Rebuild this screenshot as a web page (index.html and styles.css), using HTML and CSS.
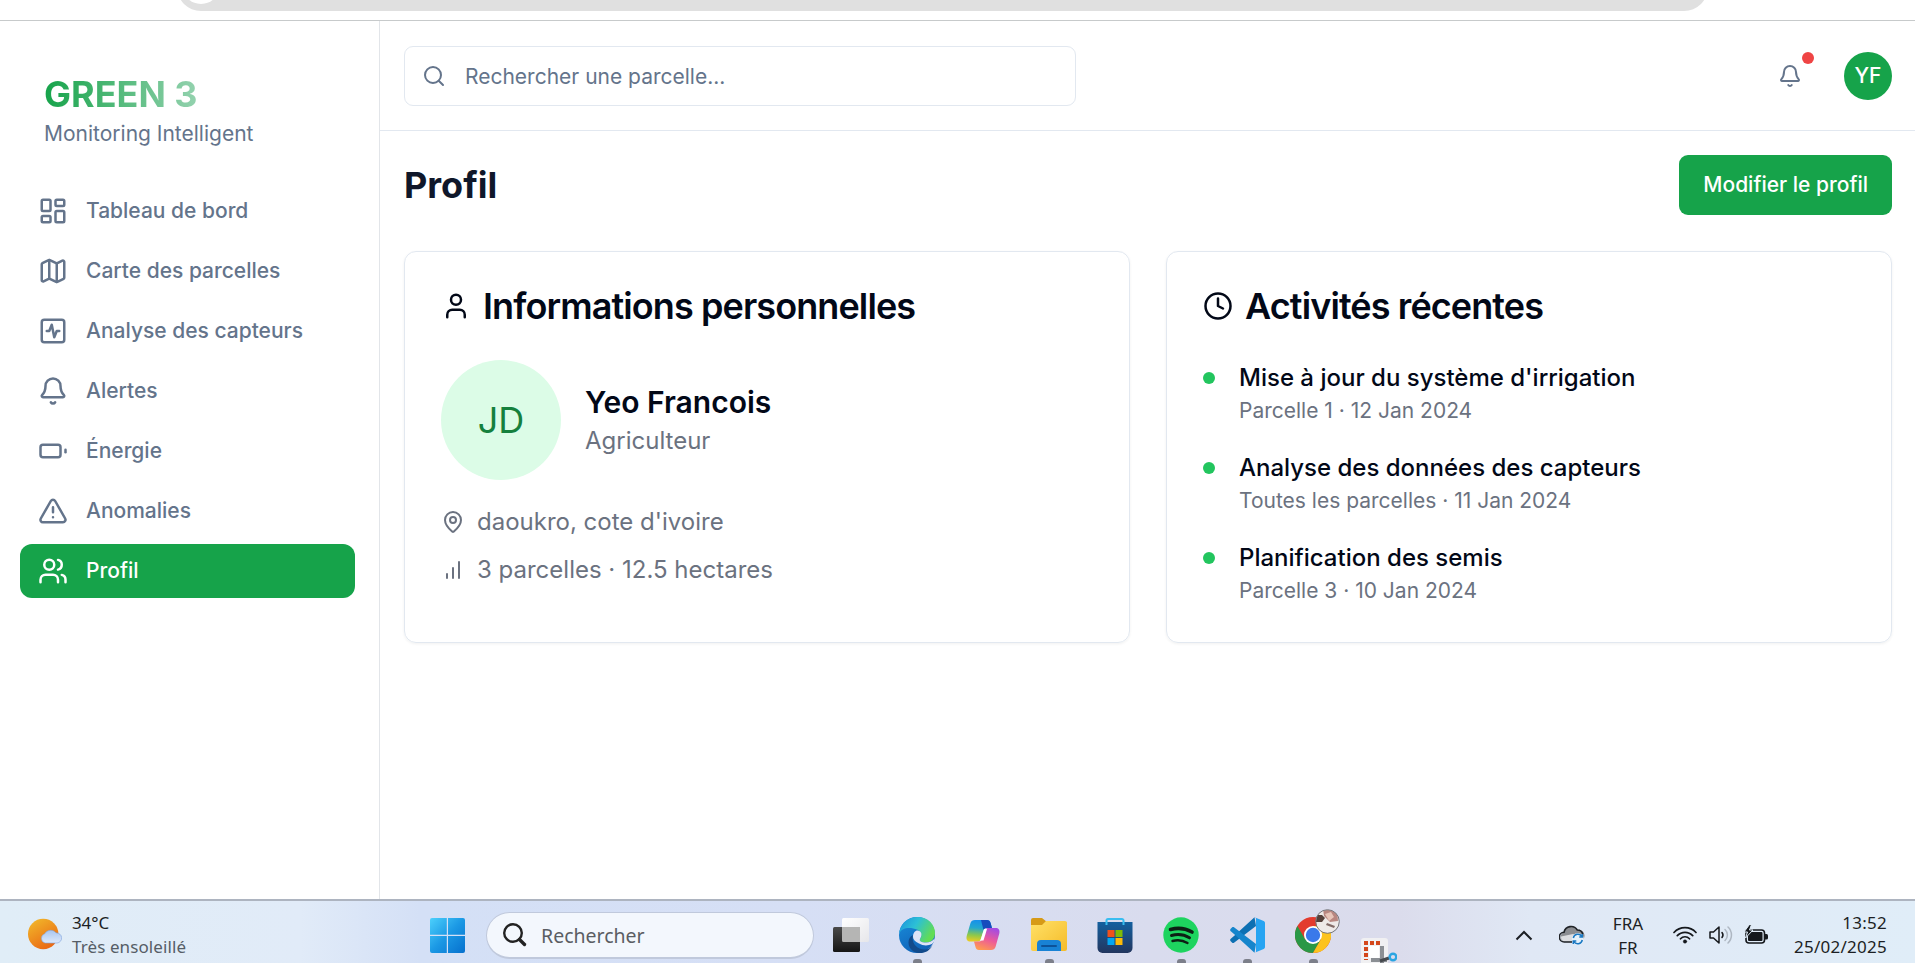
FILE: index.html
```html
<!DOCTYPE html>
<html lang="fr">
<head>
<meta charset="utf-8">
<title>Green 3 - Profil</title>
<link rel="stylesheet" href="styles.css">
</head>
<body>
<div class="browser-bar"><div class="address"><span class="address-icon"></span></div></div>

<div class="app">
  <aside class="sidebar">
    <div class="brand">
      <div class="brand-name">GREEN 3</div>
      <div class="brand-sub">Monitoring Intelligent</div>
    </div>
    <nav class="nav">
      <a class="nav-item"><svg class="icon" viewBox="0 0 24 24"><rect width="7" height="9" x="3" y="3" rx="1"/><rect width="7" height="5" x="14" y="3" rx="1"/><rect width="7" height="9" x="14" y="12" rx="1"/><rect width="7" height="5" x="3" y="16" rx="1"/></svg>Tableau de bord</a>
      <a class="nav-item"><svg class="icon" viewBox="0 0 24 24"><path d="M14.106 5.553a2 2 0 0 0 1.788 0l3.659-1.83A1 1 0 0 1 21 4.619v12.764a1 1 0 0 1-.553.894l-4.553 2.277a2 2 0 0 1-1.788 0l-4.212-2.106a2 2 0 0 0-1.788 0l-3.659 1.83A1 1 0 0 1 3 19.381V6.618a1 1 0 0 1 .553-.894l4.553-2.277a2 2 0 0 1 1.788 0z"/><path d="M15 5.764v15M9 3.236v15"/></svg>Carte des parcelles</a>
      <a class="nav-item"><svg class="icon" viewBox="0 0 24 24"><rect width="18" height="18" x="3" y="3" rx="2"/><path d="M17 12h-2l-2 5-2-10-2 5H7"/></svg>Analyse des capteurs</a>
      <a class="nav-item"><svg class="icon" viewBox="0 0 24 24"><path d="M10.268 21a2 2 0 0 0 3.464 0"/><path d="M3.262 15.326A1 1 0 0 0 4 17h16a1 1 0 0 0 .74-1.673C19.41 13.956 18 12.499 18 8A6 6 0 0 0 6 8c0 4.499-1.411 5.956-2.738 7.326"/></svg>Alertes</a>
      <a class="nav-item"><svg class="icon" viewBox="0 0 24 24"><rect width="16" height="10" x="2" y="7" rx="2"/><path d="M22 11v2"/></svg>Énergie</a>
      <a class="nav-item"><svg class="icon" viewBox="0 0 24 24"><path d="m21.73 18-8-14a2 2 0 0 0-3.48 0l-8 14A2 2 0 0 0 4 21h16a2 2 0 0 0 1.73-3"/><path d="M12 9v4M12 17h.01"/></svg>Anomalies</a>
      <a class="nav-item active"><svg class="icon" viewBox="0 0 24 24"><path d="M16 21v-2a4 4 0 0 0-4-4H6a4 4 0 0 0-4 4v2"/><circle cx="9" cy="7" r="4"/><path d="M22 21v-2a4 4 0 0 0-3-3.87M16 3.13a4 4 0 0 1 0 7.75"/></svg>Profil</a>
    </nav>
  </aside>

  <div class="content">
    <header class="topbar">
      <div class="search"><svg class="icon small" viewBox="0 0 24 24"><circle cx="11" cy="11" r="8"/><path d="m21 21-4.3-4.3"/></svg>Rechercher une parcelle...</div>
      <div class="topbar-right">
        <div class="notif"><svg class="icon small" viewBox="0 0 24 24"><path d="M10.268 21a2 2 0 0 0 3.464 0"/><path d="M3.262 15.326A1 1 0 0 0 4 17h16a1 1 0 0 0 .74-1.673C19.41 13.956 18 12.499 18 8A6 6 0 0 0 6 8c0 4.499-1.411 5.956-2.738 7.326"/></svg><span class="notif-dot"></span></div>
        <div class="avatar">YF</div>
      </div>
    </header>

    <main class="main">
      <div class="page-head"><h1>Profil</h1><button class="btn">Modifier le profil</button></div>
      <div class="cards">
        <section class="card">
          <h2><svg class="icon" viewBox="0 0 24 24"><path d="M19 21v-2a4 4 0 0 0-4-4H9a4 4 0 0 0-4 4v2"/><circle cx="12" cy="7" r="4"/></svg>Informations personnelles</h2>
          <div class="person">
            <div class="person-avatar">JD</div>
            <div><div class="person-name">Yeo Francois</div><div class="person-role">Agriculteur</div></div>
          </div>
          <div class="facts">
            <div class="fact"><svg class="icon small" viewBox="0 0 24 24"><path d="M20 10c0 4.993-5.539 10.193-7.399 11.799a1 1 0 0 1-1.202 0C9.539 20.193 4 14.993 4 10a8 8 0 0 1 16 0"/><circle cx="12" cy="10" r="3"/></svg>daoukro, cote d'ivoire</div>
            <div class="fact"><svg class="icon small" viewBox="0 0 24 24"><path d="M12 20V10M18 20V4M6 20v-4"/></svg>3 parcelles · 12.5 hectares</div>
          </div>
        </section>
        <section class="card">
          <h2><svg class="icon" viewBox="0 0 24 24"><circle cx="12" cy="12" r="10"/><path d="M12 6v6l4 2"/></svg>Activités récentes</h2>
          <div class="activities">
            <div class="activity"><span class="bullet"></span><div><div class="activity-title">Mise à jour du système d'irrigation</div><div class="activity-sub">Parcelle 1 · 12 Jan 2024</div></div></div>
            <div class="activity"><span class="bullet"></span><div><div class="activity-title">Analyse des données des capteurs</div><div class="activity-sub">Toutes les parcelles · 11 Jan 2024</div></div></div>
            <div class="activity"><span class="bullet"></span><div><div class="activity-title">Planification des semis</div><div class="activity-sub">Parcelle 3 · 10 Jan 2024</div></div></div>
          </div>
        </section>
      </div>
    </main>
  </div>
</div>

<footer class="taskbar">
  <div class="weather">
    <svg width="34" height="32" viewBox="0 0 34 32"><defs><linearGradient id="sun" x1="0" y1="0" x2=".6" y2="1"><stop offset="0" stop-color="#f2bd2c"/><stop offset="1" stop-color="#ea6a14"/></linearGradient><linearGradient id="cloud" x1="0" y1="0" x2="0" y2="1"><stop offset="0" stop-color="#a9c6f0"/><stop offset="1" stop-color="#dde9fb"/></linearGradient></defs><circle cx="15.200" cy="16" r="15.200" fill="url(#sun)"/><path d="M17 25a4.800 4.800 0 0 1-.3-9.200 7 7 0 0 1 11.600-.8 5 5 0 0 1 .7 10z" fill="url(#cloud)" stroke="#7fa3dc" stroke-width=".6"/></svg>
    <div class="weather-text"><div class="temp">34°C</div><div class="sky">Très ensoleillé</div></div>
  </div>

  <div class="apps">
    <svg class="win" width="35" height="35" viewBox="0 0 35 35"><defs><linearGradient id="win" gradientUnits="userSpaceOnUse" x1="0" y1="0" x2="35" y2="35"><stop offset="0" stop-color="#4cd0fc"/><stop offset=".5" stop-color="#1b98e4"/><stop offset="1" stop-color="#0670cd"/></linearGradient></defs><path fill="url(#win)" d="M2 0h14.800v16.800H0V2a2 2 0 0 1 2-2zM18 0h15a2 2 0 0 1 2 2v14.800H18zM0 18h16.800v17H2a2 2 0 0 1-2-2zM18 18h17v15a2 2 0 0 1-2 2H18z"/></svg>
    <div class="task-search"><svg width="24" height="24" viewBox="0 0 24 24" fill="none" stroke="#222" stroke-width="2.400"><circle cx="10" cy="10" r="8.800"/><path d="M16.500 16.500l5 5" stroke-width="3.400" stroke-linecap="round"/></svg>Rechercher</div>

    <div class="app-cell"><svg width="36" height="36" viewBox="0 0 36 36"><defs><linearGradient id="tv" x1="0" y1="0" x2="0" y2="1"><stop offset="0" stop-color="#4a4a4a"/><stop offset="1" stop-color="#151515"/></linearGradient><linearGradient id="tw" x1="0" y1="0" x2="1" y2="1"><stop offset="0" stop-color="#fff"/><stop offset="1" stop-color="#e6e6ea"/></linearGradient></defs><rect x="9" y="1" width="27" height="24" rx="1.500" fill="url(#tw)"/><rect x="0" y="10" width="27" height="25" rx="1.500" fill="url(#tv)"/><path d="M9 10h18v15H10.500a1.500 1.500 0 0 1-1.500-1.500z" fill="#b5b5b4"/></svg></div>

    <div class="app-cell open"><svg width="36" height="36" viewBox="0 0 36 36"><defs><linearGradient id="e1" x1="0" y1="0" x2="1" y2=".45"><stop offset="0" stop-color="#1a8fdc"/><stop offset=".5" stop-color="#2cc0d6"/><stop offset="1" stop-color="#62dc55"/></linearGradient><linearGradient id="e2" x1="0" y1="0" x2=".5" y2="1"><stop offset="0" stop-color="#1a8fdc"/><stop offset="1" stop-color="#0f62b8"/></linearGradient></defs><circle cx="18" cy="18" r="18" fill="url(#e2)"/><path d="M0 17C1 7 8.500 0 18.500 0 29 0 36 7.500 36 16c0 6.500-4.500 9.500-9 9.500-4.500 0-7-1.500-6-3.500 2.500-3 1.500-8-3-9.500C11 9.500 2 10.500 0 17z" fill="url(#e1)"/><path d="M14 18c-2 8 4 15.500 13 14.500 3-.5 5-2 6.500-4.500C29 38 18 37 14 34 8 30 8 20.500 14 18z" fill="#114a8b"/><path d="M14 20c0-4 2-6.500 4.500-6.500 3.500 0 5.500 4 2.500 8.500-1 2 1.500 3.500 6 3.500 3.500 0 6.500-1.500 8.500-4 .5 2-.5 3.500-2.500 5.500-4 2-9 2-13-.5-4-2-6-4-6-6.500z" fill="#dde3f6"/></svg></div>

    <div class="app-cell"><svg width="34" height="32" viewBox="0 0 34 32"><defs><linearGradient id="c1" x1=".3" y1="0" x2=".2" y2="1"><stop offset="0" stop-color="#1790ea"/><stop offset=".35" stop-color="#23a7cf"/><stop offset=".7" stop-color="#8ec84b"/><stop offset="1" stop-color="#f0cc20"/></linearGradient><linearGradient id="c2" x1=".7" y1="0" x2=".3" y2="1"><stop offset="0" stop-color="#a44be2"/><stop offset=".5" stop-color="#ec5a9a"/><stop offset="1" stop-color="#ff9a50"/></linearGradient></defs><path d="M9 1h12c2 0 3 1 3.600 3L26 9h-5c-2 0-3 1-3.500 3l-2.500 8c-.5 1.500-1.500 2.500-3 2.500H4C1 22.500 0 20 .7 17L4.500 4C5.200 2 6.500 1 9 1z" fill="url(#c1)"/><path d="M15 1h6c2 0 3 1 3.600 3L26 9h-5c-2 0-3 .5-3.500 2z" fill="#174bbd"/><path d="M25 31H13c-2 0-3-1-3.500-3L8 22.500h5c2 0 2.700-1 3.300-3l2.500-7.500c.5-2 1.500-3 3.200-3h8c3 0 4 2.500 3.300 5.500L29.500 28c-.7 2-2 3-4.500 3z" fill="url(#c2)"/><path d="M18 10h3l-3.500 11.500h-3.200z" fill="#fff"/></svg></div>

    <div class="app-cell open"><svg width="36" height="34" viewBox="0 0 36 34"><defs><linearGradient id="f1" x1="0" y1="0" x2="1" y2="1"><stop offset="0" stop-color="#ffe168"/><stop offset="1" stop-color="#f5bb28"/></linearGradient></defs><path d="M0 2a2 2 0 0 1 2-2h9l5 4h18a2 2 0 0 1 2 2v8H0z" fill="#d69a17"/><path d="M0 7h11l4-4h19a2 2 0 0 1 2 2v26a2 2 0 0 1-2 2H2a2 2 0 0 1-2-2z" fill="url(#f1)"/><path d="M6 33v-7a4 4 0 0 1 4-4h16a4 4 0 0 1 4 4v7z" fill="#1882d5"/><path d="M11 28h14" stroke="#0c5299" stroke-width="2" stroke-linecap="round"/></svg></div>

    <div class="app-cell"><svg width="36" height="36" viewBox="0 0 36 36"><defs><linearGradient id="s1" x1="0" y1="0" x2="0" y2="1"><stop offset="0" stop-color="#14609f"/><stop offset="1" stop-color="#22365f"/></linearGradient></defs><path d="M.5 5h35v26a5 5 0 0 1-5 5h-25a5 5 0 0 1-5-5z" fill="url(#s1)"/><path d="M9.500 8V3.500a1.500 1.500 0 0 1 1.500-1.500h14a1.500 1.500 0 0 1 1.500 1.500V8" fill="none" stroke="#39bdf0" stroke-width="2"/><path fill="#f1511b" d="M10.500 13h7v7h-7z"/><path fill="#80bb05" d="M18.500 13h7v7h-7z"/><path fill="#05a6f0" d="M10.500 21h7v7h-7z"/><path fill="#fdba08" d="M18.500 21h7v7h-7z"/></svg></div>

    <div class="app-cell open"><svg width="36" height="36" viewBox="0 0 36 36"><circle cx="18" cy="18" r="17.700" fill="#1ed45f"/><g fill="none" stroke="#0d2014" stroke-linecap="round"><path d="M7.500 12.500c7-2 15-1.200 21.500 2.500" stroke-width="3.600"/><path d="M8.500 18.500c6-1.700 12.500-1 18 2.300" stroke-width="3"/><path d="M9.500 24c5-1.300 10.500-.7 15 2" stroke-width="2.400"/></g></svg></div>

    <div class="app-cell open"><svg width="36" height="36" viewBox="0 0 36 36"><path d="M25.500.3 5 19l-3.500 3a1.500 1.500 0 0 0 0 2l1.700 1.700c.6.500 1.200.5 1.800 0L27 9z" fill="#0d70b3"/><path d="M25.500 35.700 5 17l-3.500-3a1.500 1.500 0 0 1 0-2l1.700-1.700c.6-.5 1.200-.5 1.800 0L27 27z" fill="#1685cc"/><path d="M25.500.3 34.700 4a2 2 0 0 1 1.300 2v24a2 2 0 0 1-1.300 2l-9.200 3.700c1 0 1.500-.5 1.500-1.700V2c0-1.200-.5-1.700-1.500-1.700z" fill="#27a4f2"/></svg></div>

    <div class="app-cell open"><svg width="36" height="36" viewBox="0 0 36 36"><circle cx="18" cy="18" r="18" fill="#e33b2e"/><path d="M2.400 9A18 18 0 0 0 18 36l7.800-13.500-15.600 0z" fill="#2a9846"/><path d="M18 36A18 18 0 0 0 33.600 9H18l7.800 13.500z" fill="#fcc31e"/><circle cx="18" cy="18" r="9" fill="#fff"/><circle cx="18" cy="18" r="7.200" fill="#3a79ea"/></svg>
      <svg class="profile-badge" width="25" height="25" viewBox="0 0 25 25"><defs><clipPath id="pb"><circle cx="12.500" cy="12.500" r="11.500"/></clipPath></defs><g clip-path="url(#pb)"><path fill="#eeeae8" d="M0 0h25v25H0z"/><path d="M0 6h7l3 3-3 4H0z" fill="#55403a"/><path d="M8 0h14l1 12-8 1-6-6z" fill="#b98780"/><path d="M10 5l6-2 3 5-5 4z" fill="#e8c5b8"/><path d="M12 14l8 3-1 2-8-3z" fill="#826b67"/></g><circle cx="12.500" cy="12.500" r="11.800" fill="none" stroke="#77777b" stroke-width="1"/></svg></div>

    <div class="app-cell snip"><svg width="36" height="26" viewBox="0 0 36 26"><rect width="27" height="30" rx="3" fill="#f0f0f2"/><path d="M3 5h17M5 9v13" fill="none" stroke="#d4471b" stroke-width="4" stroke-dasharray="4 2"/><path d="M8 8h10v12H8z" fill="#fff"/><path d="M21 8v18M10 22h16" stroke="#8b8f94" stroke-width="4"/><path d="M19 23l9-3" stroke="#45494e" stroke-width="3"/><circle cx="32" cy="19" r="3.300" fill="none" stroke="#2ba5e2" stroke-width="2.400"/></svg></div>
  </div>

  <div class="tray">
    <svg class="chevron" width="18" height="11" viewBox="0 0 18 11" fill="none" stroke="#1c1f24" stroke-width="2"><path d="M1.500 9.500 9 2l7.500 7.500"/></svg>
    <svg class="onedrive" width="26" height="20" viewBox="0 0 26 20"><path d="M5.500 16.500A4.800 4.800 0 0 1 5 7.200 7.300 7.300 0 0 1 18.300 5 5.700 5.700 0 0 1 21 16.500z" fill="#8b8d91"/><path d="M5.500 16.500A4.800 4.800 0 0 1 2 11.500L14 9l7 4-3 3.500z" fill="#dcdde0"/><path d="M13 17H5.500A4.900 4.900 0 0 1 5 7.200 7.300 7.300 0 0 1 18.300 5 5.700 5.700 0 0 1 23.800 9" fill="none" stroke="#1f2226" stroke-width="1.600"/><circle cx="18.800" cy="14" r="6" fill="#e5f1fb"/><path d="M14.300 13a4.700 4.700 0 0 1 8.500-1.700M23.300 9v3h-3M23.300 15a4.700 4.700 0 0 1-8.500 1.700M14.300 19v-3h3" fill="none" stroke="#1a78c2" stroke-width="1.500"/></svg>
    <div class="lang"><div>FRA</div><div>FR</div></div>
    <svg class="wifi" width="24" height="18" viewBox="0 0 24 18" fill="none" stroke="#15181c" stroke-width="1.700" stroke-linecap="round"><path d="M1 6.500a15 15 0 0 1 22 0M4.300 9.700a10.500 10.500 0 0 1 15.400 0M7.500 12.800a6 6 0 0 1 9 0"/><circle cx="12" cy="15.500" r="1.700" fill="#15181c" stroke-width=".5"/></svg>
    <svg class="volume" width="24" height="20" viewBox="0 0 24 20" fill="none" stroke="#15181c" stroke-width="1.500" stroke-linecap="round" stroke-linejoin="round"><path d="M1 7h3.500L10 2v16l-5.500-5H1zM13 7.500a4 4 0 0 1 0 5"/><path d="M16 4.500a7.500 7.500 0 0 1 0 11M19 2a11 11 0 0 1 0 16" stroke="#aeb7c2"/></svg>
    <svg class="battery" width="25" height="20" viewBox="0 0 25 20"><rect x="2" y="5" width="18.500" height="13" rx="3" fill="none" stroke="#15181c" stroke-width="1.600"/><rect x="4" y="7" width="14.500" height="9" rx="1" fill="#15181c"/><path d="M21 9h1.500a1.500 1.500 0 0 1 1.500 1.500v2.500a1.500 1.500 0 0 1-1.500 1.500H21z" fill="#15181c"/><path d="M5.500-.5 0 7h3.500L1.500 13 9 5H5.500L7.500-.5z" fill="#15181c" stroke="#e1edf8" stroke-width="1"/></svg>
    <div class="clock"><div>13:52</div><div>25/02/2025</div></div>
  </div>
</footer>
</body>
</html>
```
FILE: styles.css
```css
* { box-sizing: border-box; }

body {
  margin: 0;
  height: 963px;
  overflow: hidden;
  display: flex;
  flex-direction: column;
  font-family: Inter, sans-serif;
  background: #fff;
  color: #020817;
}

svg { display: block; flex: none; }

.browser-bar {
  height: 21px;
  flex: none;
  overflow: hidden;
  border-bottom: 1px solid #c7cacb;
}
.address {
  margin: -37px 207px 0 177px;
  height: 48px;
  border-radius: 24px;
  background: #e0e0e0;
  padding: 3px 5px;
}
.address-icon {
  display: block;
  width: 38px;
  height: 38px;
  border-radius: 50%;
  background: #fff;
}

.app { flex: 1; min-height: 0; display: flex; }

.icon {
  width: 30px;
  height: 30px;
  fill: none;
  stroke: currentColor;
  stroke-width: 2;
  stroke-linecap: round;
  stroke-linejoin: round;
}
.icon.small { width: 24px; height: 24px; }

.sidebar {
  width: 380px;
  flex: none;
  border-right: 1px solid #e2e5e9;
  padding: 49px 24px 0 20px;
}
.brand { padding: 0 24px; height: 114px; }
.brand-name {
  width: 267px;
  font-size: 36px;
  line-height: 48px;
  font-weight: 700;
  color: transparent;
  background: linear-gradient(90deg, #16a34a, #f1f5f9);
  -webkit-background-clip: text;
  background-clip: text;
}
.brand-sub { font-size: 21px; line-height: 31px; color: #64748b; }
.nav { display: flex; flex-direction: column; gap: 6px; }
.nav-item {
  display: flex;
  align-items: center;
  gap: 18px;
  height: 54px;
  padding: 0 18px 2px;
  border-radius: 12px;
  font-size: 21px;
  font-weight: 500;
  color: #64748b;
}
.nav-item .icon { margin-top: 2px; }
.nav-item.active { background: #16a34a; color: #fff; }

.content { flex: 1; min-width: 0; }
.topbar {
  height: 110px;
  padding: 0 23px 0 24px;
  border-bottom: 1px solid #e2e8f0;
  display: flex;
  align-items: center;
  justify-content: space-between;
}
.search {
  width: 672px;
  height: 60px;
  border: 1px solid #e2e8f0;
  border-radius: 9px;
  padding: 2px 17px 0;
  display: flex;
  align-items: center;
  gap: 19px;
  font-size: 21px;
  color: #64748b;
}
.search .icon { margin-bottom: 2px; }
.topbar-right { display: flex; align-items: center; gap: 24px; }
.notif {
  position: relative;
  width: 60px;
  height: 60px;
  display: flex;
  align-items: center;
  justify-content: center;
  color: #64748b;
}
.notif-dot {
  position: absolute;
  right: 6px;
  top: 6px;
  width: 12px;
  height: 12px;
  border-radius: 50%;
  background: #ef4444;
}
.avatar {
  width: 48px;
  height: 48px;
  border-radius: 50%;
  background: #16a34a;
  color: #fff;
  font-size: 21px;
  font-weight: 500;
  display: flex;
  align-items: center;
  justify-content: center;
}

.main { padding: 24px 23px 0 24px; }
.page-head { display: flex; align-items: center; justify-content: space-between; }
h1 {
  margin: 0;
  font-size: 36px;
  line-height: 48px;
  font-weight: 700;
  color: #0f172a;
}
.btn {
  height: 60px;
  padding: 0 24px 2px;
  border: 0;
  border-radius: 9px;
  background: #16a34a;
  color: #fff;
  font-family: inherit;
  font-size: 21px;
  font-weight: 500;
}
.cards {
  margin-top: 36px;
  display: grid;
  grid-template-columns: 1fr 1fr;
  gap: 36px;
}
.card {
  height: 392px;
  border: 1px solid #e2e8f0;
  border-radius: 12px;
  padding: 36px;
  box-shadow: 0 1px 3px rgba(0, 0, 0, .06);
}
h2 {
  margin: 0;
  display: flex;
  align-items: center;
  gap: 12px;
  font-size: 36px;
  line-height: 36px;
  font-weight: 600;
  letter-spacing: -0.9px;
}
.person { margin-top: 36px; display: flex; align-items: center; gap: 24px; }
.person-avatar {
  width: 120px;
  height: 120px;
  border-radius: 50%;
  background: #dcfce7;
  color: #15803d;
  font-size: 36px;
  display: flex;
  align-items: center;
  justify-content: center;
}
.person-name { font-size: 30px; line-height: 42px; font-weight: 600; }
.person-role { font-size: 24px; line-height: 36px; color: #6b7280; }
.facts { margin-top: 24px; display: flex; flex-direction: column; gap: 12px; }
.fact {
  display: flex;
  align-items: center;
  gap: 12px;
  font-size: 24px;
  line-height: 36px;
  color: #6b7280;
}
.activities { margin-top: 36px; display: flex; flex-direction: column; gap: 24px; }
.activity { display: flex; gap: 24px; }
.bullet {
  flex: none;
  width: 12px;
  height: 12px;
  margin-top: 12px;
  border-radius: 50%;
  background: #22c55e;
}
.activity-title { font-size: 24px; line-height: 36px; font-weight: 500; }
.activity-sub { font-size: 21px; line-height: 30px; color: #6b7280; }

.taskbar {
  height: 64px;
  flex: none;
  overflow: hidden;
  border-top: 2px solid #adb4c0;
  background: linear-gradient(90deg, #e0edf7 0, #e1ebf8 300px, #d4e0f6 420px, #d6dff5 800px, #d9dcee 1150px, #dbdcec 1400px, #e0e8f5 1530px, #e0edf8 1915px);
  display: grid;
  grid-template-columns: 430px 1fr auto;
  align-items: start;
  font-family: "Noto Sans", sans-serif;
  color: #1c1f24;
}
.weather { display: flex; gap: 10px; padding: 17px 0 0 28px; }
.weather-text { margin-top: -7px; line-height: 24px; }
.temp { font-size: 17px; letter-spacing: -.1px; }
.sky { font-size: 17px; color: #565d66; letter-spacing: .1px; }

.apps { display: flex; align-items: center; height: 68px; }
.task-search {
  width: 328px;
  height: 47px;
  margin: 0 4px 0 21px;
  border: 1px solid #c0c9dc;
  border-bottom-width: 2px;
  border-radius: 24px;
  background: #f3f7fd;
  display: flex;
  align-items: center;
  gap: 14px;
  padding: 1px 16px 0;
  font-size: 19.5px;
  color: #5a5d63;
}
.app-cell {
  position: relative;
  width: 66px;
  height: 68px;
  display: flex;
  align-items: center;
  justify-content: center;
}
.app-cell.open::after {
  content: "";
  position: absolute;
  left: 29px;
  bottom: 4px;
  width: 9px;
  height: 6px;
  border-radius: 3px;
  background: #7c7f8a;
}
.profile-badge { position: absolute; left: 35px; top: 8px; }
.app-cell.snip { align-items: flex-end; padding-bottom: 5px; }

.tray { display: flex; align-items: center; height: 68px; padding-right: 28px; font-size: 17px; line-height: 24px; }
.onedrive { margin-left: 26px; }
.lang { width: 56px; margin: 2px 0 0 15px; text-align: center; }
.wifi { margin-left: 17px; }
.volume { margin-left: 12px; }
.battery { margin-left: 11px; }
.clock { width: 118px; text-align: right; letter-spacing: .25px; }
```
